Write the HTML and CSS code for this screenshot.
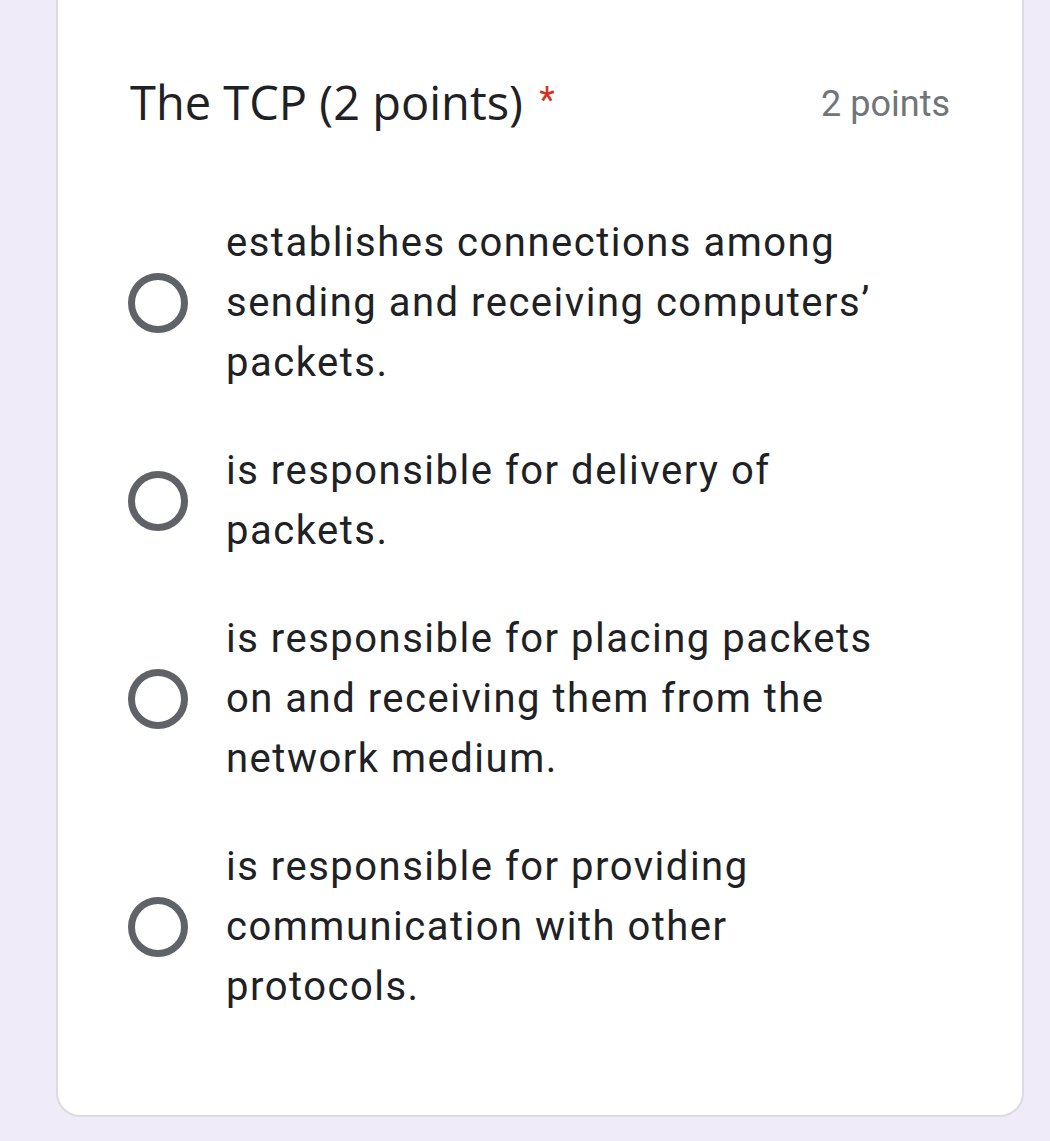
FILE: index.html
```html
<!DOCTYPE html>
<html>
<head>
<meta charset="utf-8">
<link rel="stylesheet" href="styles.css">
</head>
<body>
<div class="card">
  <div class="header">
    <div class="title">The TCP (2 points) <span class="req">*</span></div>
    <div class="points">2 points</div>
  </div>
  <div class="options">
    <label class="option"><span class="radio"></span><span class="text">establishes connections among sending and receiving computers’ packets.</span></label>
    <label class="option"><span class="radio"></span><span class="text">is responsible for delivery of packets.</span></label>
    <label class="option"><span class="radio"></span><span class="text">is responsible for placing packets on and receiving them from the network medium.</span></label>
    <label class="option"><span class="radio"></span><span class="text">is responsible for providing communication with other protocols.</span></label>
  </div>
</div>
</body>
</html>
```

FILE: styles.css
```css
html, body {
  margin: 0;
  padding: 0;
  background: #f0ebf8;
}
body {
  height: 1141px;
  overflow: hidden;
}
.card {
  margin: -24px 0 0 56px;
  width: 968px;
  box-sizing: border-box;
  background: #fff;
  border: 2px solid #dadce0;
  border-radius: 24px;
  padding: 92px 72px 98px 72px;
}
.header {
  display: flex;
  justify-content: space-between;
  align-items: baseline;
  height: 60px;
}
.title {
  font-family: "Open Sans", sans-serif;
  font-size: 47px;
  line-height: 60px;
  color: #202124;
}
.req {
  font-family: Roboto, sans-serif;
  font-size: 36px;
  color: #d93025;
  vertical-align: 8px;
  margin-left: 4px;
}
.points {
  font-family: Roboto, sans-serif;
  font-size: 36px;
  color: #70757a;
  position: relative;
  top: -4px;
}
.options {
  margin-top: 83px;
  display: flex;
  flex-direction: column;
  gap: 48px;
}
.option {
  display: flex;
  align-items: center;
  gap: 38px;
}
.radio {
  flex: none;
  width: 60px;
  height: 60px;
  box-sizing: border-box;
  border: 7px solid #5f6368;
  border-radius: 50%;
  margin-left: -2px;
}
.text {
  font-family: Roboto, sans-serif;
  font-size: 40px;
  line-height: 60px;
  letter-spacing: 1.5px;
  color: #202124;
  width: 660px;
}
```
